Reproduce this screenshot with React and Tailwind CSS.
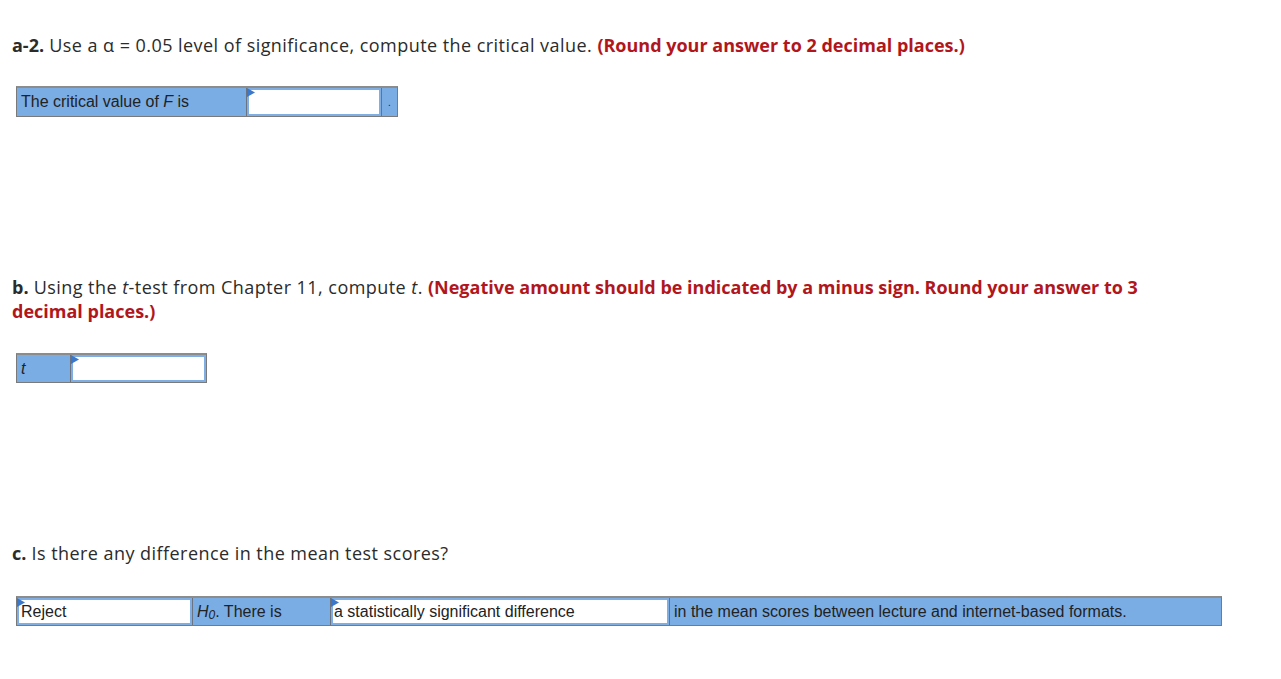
import React from "react";

const Flag = () => (
  <svg className="absolute left-0 top-0" width="8" height="9" viewBox="0 0 8 9">
    <polygon points="0,0 8,4.5 0,9" fill="#3b78c9" />
  </svg>
);

const InputCell = ({ w, text }) => (
  <div className={`relative h-full border-l border-[#6b7280] bg-white ${w}`}>
    <div className="h-full border-2 border-[#7eaee3] bg-white pl-[1px] flex items-center">
      <span className="text-[16px] text-[#222] leading-none">{text}</span>
    </div>
    <Flag />
  </div>
);

const head = "text-[18px] leading-[24px] text-[#2b2b2b] tracking-[0.45px]";
const red = "font-bold text-[#b1161c] tracking-normal";

export default function App() {
  return (
    <div className="w-[1281px] h-[679px] bg-white overflow-hidden" style={{ fontFamily: "'Open Sans', Lato, sans-serif" }}>
      <div className="pl-[12px] pt-[33px]">
        <p className={head}>
          <span className="font-bold tracking-normal">a-2.</span> Use a α = 0.05 level of significance, compute the critical value.{" "}
          <span className={red}>(Round your answer to 2 decimal places.)</span>
        </p>
      </div>
      <div className="ml-[16px] mt-[29px] w-[382px] h-[31px] flex border-t-2 border-t-[#8c8c8c] border-x border-b border-[#7a7a7a]" style={{ fontFamily: "'Liberation Sans', Arial, sans-serif" }}>
        <div className="w-[229px] h-full bg-[#7aade4] flex items-center pl-[4px] text-[16px] text-[#222]">
          The critical value of&nbsp;<i>F</i>&nbsp;is
        </div>
        <InputCell w="w-[135px]" text="" />
        <div className="flex-1 h-full bg-[#7aade4] border-l border-[#6b7280] flex items-center justify-center text-[10px] text-[#222]">.</div>
      </div>

      <div className="pl-[12px] mt-[158px]">
        <p className={`${head} w-[1150px]`}>
          <span className="font-bold tracking-normal">b.</span> Using the <i>t</i>-test from Chapter 11, compute <i>t</i>.{" "}
          <span className={red}>(Negative amount should be indicated by a minus sign. Round your answer to 3 decimal places.)</span>
        </p>
      </div>
      <div className="ml-[16px] mt-[30px] w-[191px] h-[30px] flex border-t-2 border-t-[#8c8c8c] border-x border-b border-[#7a7a7a]" style={{ fontFamily: "'Liberation Sans', Arial, sans-serif" }}>
        <div className="w-[53px] h-full bg-[#7aade4] flex items-center pl-[4px] text-[16px] text-[#222]">
          <i>t</i>
        </div>
        <InputCell w="flex-1" text="" />
      </div>

      <div className="pl-[12px] mt-[158px]">
        <p className={head}>
          <span className="font-bold tracking-normal">c.</span> Is there any difference in the mean test scores?
        </p>
      </div>
      <div className="ml-[16px] mt-[31px] w-[1206px] h-[30px] flex border-t-2 border-t-[#8c8c8c] border-x border-b border-[#7a7a7a]" style={{ fontFamily: "'Liberation Sans', Arial, sans-serif" }}>
        <div className="relative w-[175px] h-full bg-white">
          <div className="h-full border-2 border-[#7eaee3] pl-[2px] flex items-center text-[16px] text-[#222]">Reject</div>
          <Flag />
        </div>
        <div className="w-[138px] h-full bg-[#7aade4] border-l border-[#6b7280] flex items-center pl-[4px] text-[16px] text-[#222]">
          <i>H</i><sub className="text-[12px] italic">0</sub>. There is
        </div>
        <InputCell w="w-[339px]" text="a statistically significant difference" />
        <div className="flex-1 h-full bg-[#7aade4] border-l border-[#6b7280] flex items-center pl-[4px] text-[16px] text-[#222]">
          in the mean scores between lecture and internet-based formats.
        </div>
      </div>
    </div>
  );
}
